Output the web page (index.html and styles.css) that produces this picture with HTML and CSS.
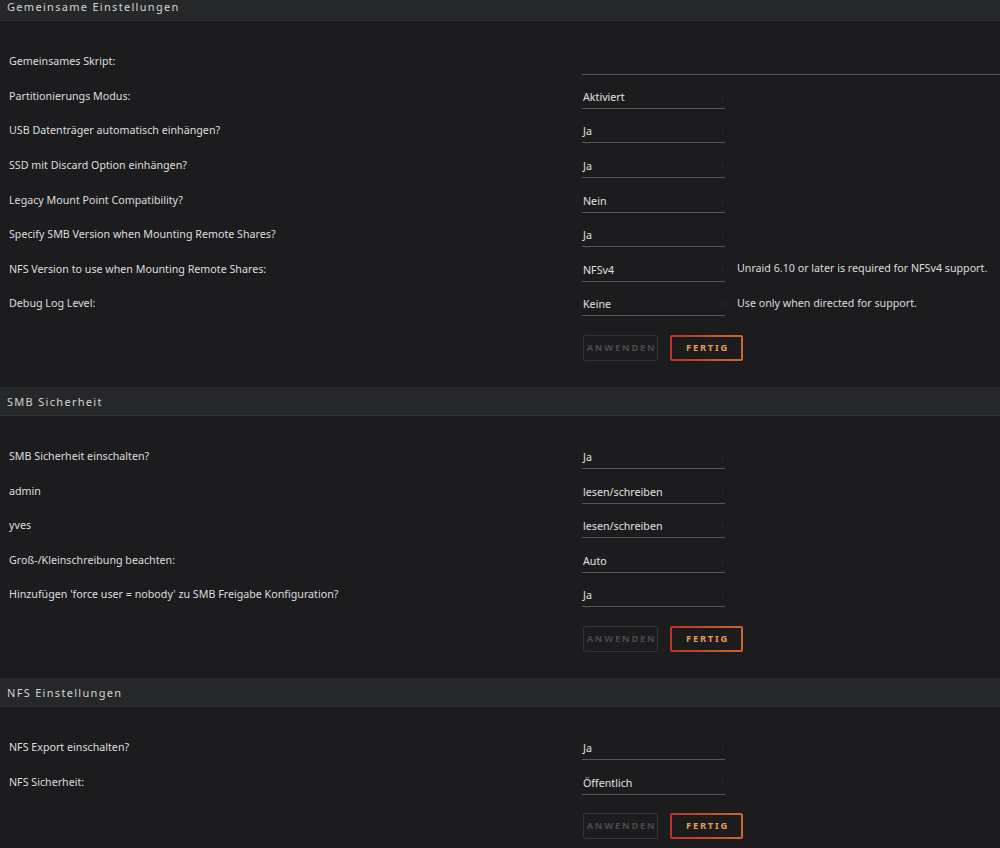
FILE: index.html
```html
<!DOCTYPE html>
<html lang="de">
<head>
<meta charset="utf-8">
<title>Einstellungen</title>
<link rel="stylesheet" href="styles.css">
</head>
<body>
<section class="section first">
  <div class="title">Gemeinsame Einstellungen</div>
  <div class="rows">
    <div class="row"><span class="label">Gemeinsames Skript:</span><span class="input wide"></span></div>
    <div class="row"><span class="label">Partitionierungs Modus:</span><span class="select">Aktiviert</span></div>
    <div class="row"><span class="label">USB Datenträger automatisch einhängen?</span><span class="select">Ja</span></div>
    <div class="row"><span class="label">SSD mit Discard Option einhängen?</span><span class="select">Ja</span></div>
    <div class="row"><span class="label">Legacy Mount Point Compatibility?</span><span class="select">Nein</span></div>
    <div class="row"><span class="label">Specify SMB Version when Mounting Remote Shares?</span><span class="select">Ja</span></div>
    <div class="row"><span class="label">NFS Version to use when Mounting Remote Shares:</span><span class="select">NFSv4</span><span class="note">Unraid 6.10 or later is required for NFSv4 support.</span></div>
    <div class="row"><span class="label">Debug Log Level:</span><span class="select">Keine</span><span class="note">Use only when directed for support.</span></div>
  </div>
  <div class="buttons"><button class="btn disabled">Anwenden</button><button class="btn done">Fertig</button></div>
</section>
<section class="section">
  <div class="title">SMB Sicherheit</div>
  <div class="rows">
    <div class="row"><span class="label">SMB Sicherheit einschalten?</span><span class="select">Ja</span></div>
    <div class="row"><span class="label">admin</span><span class="select">lesen/schreiben</span></div>
    <div class="row"><span class="label">yves</span><span class="select">lesen/schreiben</span></div>
    <div class="row"><span class="label">Groß-/Kleinschreibung beachten:</span><span class="select">Auto</span></div>
    <div class="row"><span class="label">Hinzufügen 'force user = nobody' zu SMB Freigabe Konfiguration?</span><span class="select">Ja</span></div>
  </div>
  <div class="buttons"><button class="btn disabled">Anwenden</button><button class="btn done">Fertig</button></div>
</section>
<section class="section">
  <div class="title">NFS Einstellungen</div>
  <div class="rows">
    <div class="row"><span class="label">NFS Export einschalten?</span><span class="select">Ja</span></div>
    <div class="row"><span class="label">NFS Sicherheit:</span><span class="select">Öffentlich</span></div>
  </div>
  <div class="buttons"><button class="btn disabled">Anwenden</button><button class="btn done">Fertig</button></div>
</section>
</body>
</html>
```
FILE: styles.css
```css
html, body {
  margin: 0;
  padding: 0;
  background: #1c1c1e;
  overflow: hidden;
}
body {
  font-family: "Noto Sans", "Open Sans", sans-serif;
  font-size: 10.7px;
  color: #dcdcdc;
}
.section {
  padding-bottom: 26px;
}
.section.first {
  margin-top: -8px;
}
.title {
  height: 28px;
  line-height: 30px;
  background: #262729;
  border-bottom: 1px solid #303133;
  padding-left: 7px;
  letter-spacing: 1.3px;
  color: #d4d4d4;
  font-size: 11px;
}
.rows {
  padding-top: 23px;
}
.row {
  display: grid;
  grid-template-columns: 561px 143px auto;
  column-gap: 12px;
  height: 34.6px;
  align-items: center;
  padding-left: 9px;
  white-space: nowrap;
}
.label {
  color: #dedede;
}
.select, .input {
  position: relative;
  height: 23px;
  line-height: 25px;
  padding-left: 1px;
  border-bottom: 1px solid #555658;
  margin-top: 2px;
  color: #e0e0e0;
}
.select::after {
  content: "";
  position: absolute;
  right: 2px;
  top: 9px;
  width: 1px;
  height: 6px;
  background: #28292c;
}
.input.wide {
  grid-column: 2 / 4;
  margin-top: 4px;
}
.note {
  color: #dcdcdc;
  line-height: 25px;
}
.buttons {
  display: flex;
  gap: 12px;
  padding-left: 583px;
  margin-top: 14px;
}
.btn {
  height: 26px;
  box-sizing: border-box;
  background: transparent;
  font-family: "Noto Sans", "Open Sans", sans-serif;
  font-weight: bold;
  font-size: 9.3px;
  letter-spacing: 1.8px;
  text-transform: uppercase;
  border-radius: 2px;
  padding: 0 0 0 2px;
}
.btn.disabled {
  width: 75px;
  border: 1px solid #333436;
  color: #4a4a4c;
}
.btn.done {
  width: 73px;
  border: 2px solid transparent;
  background: linear-gradient(#1c1c1e, #1c1c1e) padding-box, linear-gradient(90deg, #b8342a, #c9682c) border-box;
  color: #e89a55;
}
```
